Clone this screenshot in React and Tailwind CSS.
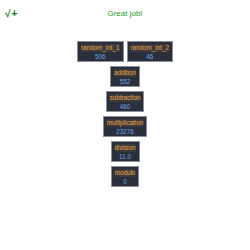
import React from "react";

const Cell = ({ label, value }) => (
  <div className="flex flex-col items-center h-[21px] bg-[#2a2f3b] border border-[#8a8f99] px-[3px] pt-[2px] leading-[8px]">
    <span className="text-[6.3px] text-[#eea545] bg-[#3a3a3c]">{label}</span>
    <span className="text-[6.3px] text-[#6aa6ea] mt-[1px]">{value}</span>
  </div>
);

export default function App() {
  const rows = [
    [
      { label: "random_int_1", value: "506" },
      { label: "random_int_2", value: "46" },
    ],
    [{ label: "addition", value: "552" }],
    [{ label: "subtraction", value: "460" }],
    [{ label: "multiplication", value: "23276" }],
    [{ label: "division", value: "11.0" }],
    [{ label: "modulo", value: "0" }],
  ];

  return (
    <div className="w-[250px] h-[250px] bg-white font-['Liberation_Sans',Arial,sans-serif]">
      <div className="flex items-center h-[27px] px-[5px]">
        <span className="text-[10px] font-bold text-[#157a15] w-[20px] tracking-[1px]">√+</span>
        <span className="flex-1 text-center text-[8px] text-[#1f9a1f] pr-[20px]">Great job!</span>
      </div>
      <div className="flex flex-col items-center gap-[4px] mt-[14px]">
        {rows.map((row, i) => (
          <div key={i} className="flex gap-[3px]">
            {row.map((c) => (
              <Cell key={c.label} label={c.label} value={c.value} />
            ))}
          </div>
        ))}
      </div>
    </div>
  );
}
